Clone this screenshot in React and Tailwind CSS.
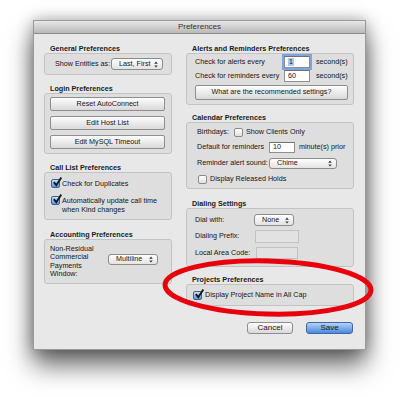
import React from "react";

const Arrows = () => (
  <svg viewBox="0 0 4 8" className="w-[4px] h-[7px] shrink-0">
    <path d="M0 3 L2 0.5 L4 3 Z M0 5 L2 7.5 L4 5 Z" fill="#333" />
  </svg>
);

const Popup = ({ label, className = "" }) => (
  <div
    className={`flex items-center justify-between pl-[7px] pr-[4px] rounded-[3px] border border-[#8c8c8c] bg-linear-to-b from-white to-[#e3e3e3] ${className}`}
  >
    <span>{label}</span>
    <Arrows />
  </div>
);

const Check = ({ checked, className = "" }) =>
  checked ? (
    <span
      className={`relative block w-[9px] h-[9px] shrink-0 rounded-[2px] border border-[#3f5f93] bg-linear-to-b from-[#cfe2fa] to-[#5e92d8] ${className}`}
    >
      <svg viewBox="0 0 10 10" className="absolute -top-[3px] left-[0px] w-[10px] h-[10px]">
        <path d="M1.8 5.2 L4.3 8.2 L9.3 0.6" stroke="#101820" strokeWidth="1.9" fill="none" />
      </svg>
    </span>
  ) : (
    <span
      className={`block w-[9px] h-[9px] shrink-0 rounded-[2px] border border-[#8a8a8a] bg-linear-to-b from-white to-[#e2e2e2] ${className}`}
    />
  );

const PushButton = ({ children, className = "" }) => (
  <div
    className={`flex items-center justify-center rounded-[2px] border border-[#8e8e8e] bg-linear-to-b from-[#fdfdfd] to-[#d9d9d9] ${className}`}
  >
    {children}
  </div>
);

const Field = ({ children, disabled, className = "" }) => (
  <div
    className={`flex items-center pl-[3px] border ${
      disabled ? "border-[#c2c2c2] bg-[#e2e2e2]" : "border-[#8f8f8f] border-t-[#6f6f6f] bg-white"
    } ${className}`}
  >
    {children}
  </div>
);

const Group = ({ title, className = "", boxClass = "", children }) => (
  <div className={className}>
    <div className="h-[9px] leading-[9px] pl-[6px] font-bold text-[#1a1a1a]">{title}</div>
    <div className={`rounded-[3px] border border-[#c3c3c3] bg-[#dedede] ${boxClass}`}>{children}</div>
  </div>
);

export default function App() {
  return (
    <div className="relative w-[400px] h-[397px] overflow-hidden bg-white pt-[20px] pl-[33px] font-['Liberation_Sans',Arial,sans-serif] text-[7.2px] text-[#151515]">
      <div className="w-[333px] h-[330px] flex flex-col bg-[#e8e8e8] border border-[#9a9a9a] shadow-[0_15px_24px_rgba(0,0,0,0.6),0_0_14px_rgba(0,0,0,0.3)]">
        <div className="h-[13px] shrink-0 flex items-center justify-center text-[8px] text-[#333] bg-linear-to-b from-[#e8e8e8] to-[#b9b9b9] border-b border-[#8a8a8a]">
          Preferences
        </div>

        <div className="flex pt-[10px] pl-[10px]">
          {/* left column */}
          <div className="w-[128px] flex flex-col">
            <Group title="General Preferences" boxClass="h-[22px] flex items-center pl-[10px]">
              <span className="w-[56px]">Show Entities as:</span>
              <Popup label="Last, First" className="w-[52px] h-[12px]" />
            </Group>

            <Group title="Login Preferences" className="mt-[9px]" boxClass="h-[61px] flex flex-col gap-[5px] pt-[3px] pl-[5px] pr-[6px]">
              <PushButton className="h-[14px]">Reset AutoConnect</PushButton>
              <PushButton className="h-[14px]">Edit Host List</PushButton>
              <PushButton className="h-[14px]">Edit MySQL Timeout</PushButton>
            </Group>

            <Group title="Call List Preferences" className="mt-[9px]" boxClass="h-[48px] flex flex-col pt-[6px] pl-[6px]">
              <div className="flex items-center gap-[2px] h-[9px] leading-[9px]">
                <Check checked />
                <span>Check for Duplicates</span>
              </div>
              <div className="flex items-start gap-[2px] mt-[8px] leading-[9px]">
                <Check checked />
                <span>
                  Automatically update call time
                  <br />
                  when Kind changes
                </span>
              </div>
            </Group>

            <Group title="Accounting Preferences" className="mt-[10px]" boxClass="h-[45px] flex items-center pl-[5px]">
              <div className="w-[58px] leading-[8.4px]">
                Non-Residual
                <br />
                Commercial
                <br />
                Payments
                <br />
                Window:
              </div>
              <Popup label="Multiline" className="w-[50px] h-[11px] -mt-[4px]" />
            </Group>
          </div>

          {/* right column */}
          <div className="w-[168px] ml-[14px] flex flex-col">
            <Group title="Alerts and Reminders Preferences" boxClass="h-[52px] flex flex-col pt-[2px] pl-[8px] pr-[5px]">
              <div className="flex items-center h-[12px]">
                <span className="w-[89px]">Check for alerts every</span>
                <Field className="w-[26px] h-[12px] outline-[2px] outline-[#7ea6dc]">
                  <span className="bg-[#a9c9f1] px-[1px] leading-[8px]">1</span>
                </Field>
                <span className="ml-[6px]">second(s)</span>
              </div>
              <div className="flex items-center h-[12px] mt-[2px]">
                <span className="w-[89px]">Check for reminders every</span>
                <Field className="w-[26px] h-[12px]">60</Field>
                <span className="ml-[6px]">second(s)</span>
              </div>
              <PushButton className="h-[15px] w-[153px] mt-[3px]">What are the recommended settings?</PushButton>
            </Group>

            <Group title="Calendar Preferences" className="mt-[8px]" boxClass="h-[67px] flex flex-col pt-[3px] pl-[10px]">
              <div className="flex items-center h-[12px]">
                <span className="w-[37px]">Birthdays:</span>
                <Check />
                <span className="ml-[3px]">Show Clients Only</span>
              </div>
              <div className="flex items-center h-[12px] mt-[3px]">
                <span className="w-[72px]">Default for reminders</span>
                <Field className="w-[26px] h-[11px]">10</Field>
                <span className="ml-[4px]">minute(s) prior</span>
              </div>
              <div className="flex items-center h-[12px] mt-[4px]">
                <span className="w-[72px]">Reminder alert sound:</span>
                <Popup label="Chime" className="w-[68px] h-[11px]" />
              </div>
              <div className="flex items-center h-[12px] mt-[4px]">
                <Check className="ml-[1px]" />
                <span className="ml-[3px]">Display Released Holds</span>
              </div>
            </Group>

            <Group title="Dialing Settings" className="mt-[10px]" boxClass="h-[59px] flex flex-col pt-[5px] pl-[8px]">
              <div className="flex items-center h-[12px]">
                <span className="w-[59px]">Dial with:</span>
                <Popup label="None" className="w-[40px] h-[12px]" />
              </div>
              <div className="flex items-center h-[13px] mt-[4px]">
                <span className="w-[60px]">Dialing Prefix:</span>
                <Field disabled className="w-[44px] h-[13px]" />
              </div>
              <div className="flex items-center h-[12px] mt-[4px]">
                <span className="w-[61px]">Local Area Code:</span>
                <Field disabled className="w-[42px] h-[12px]" />
              </div>
            </Group>

            <Group title="Projects Preferences" className="mt-[8px]" boxClass="h-[22px] flex items-center pl-[6px]">
              <Check checked />
              <span className="ml-[3px]">Display Project Name in All Cap</span>
            </Group>

            <div className="flex justify-end gap-[13px] mt-[16px] pr-[1px]">
              <PushButton className="w-[46px] h-[12px] rounded-[3px] text-[8px]">Cancel</PushButton>
              <div className="w-[47px] h-[12px] flex items-center justify-center rounded-[3px] border border-[#3d68a8] bg-linear-to-b from-[#b4d2f6] to-[#4a88de] text-[8px]">
                Save
              </div>
            </div>
          </div>
        </div>
      </div>

      <svg className="absolute left-0 top-0 w-[400px] h-[397px] pointer-events-none" viewBox="0 0 400 397">
        <ellipse
          cx="268"
          cy="287.5"
          rx="103"
          ry="26.5"
          fill="none"
          stroke="#e8000c"
          strokeWidth="5"
          transform="rotate(1.5 268 287.5)"
        />
      </svg>
    </div>
  );
}
